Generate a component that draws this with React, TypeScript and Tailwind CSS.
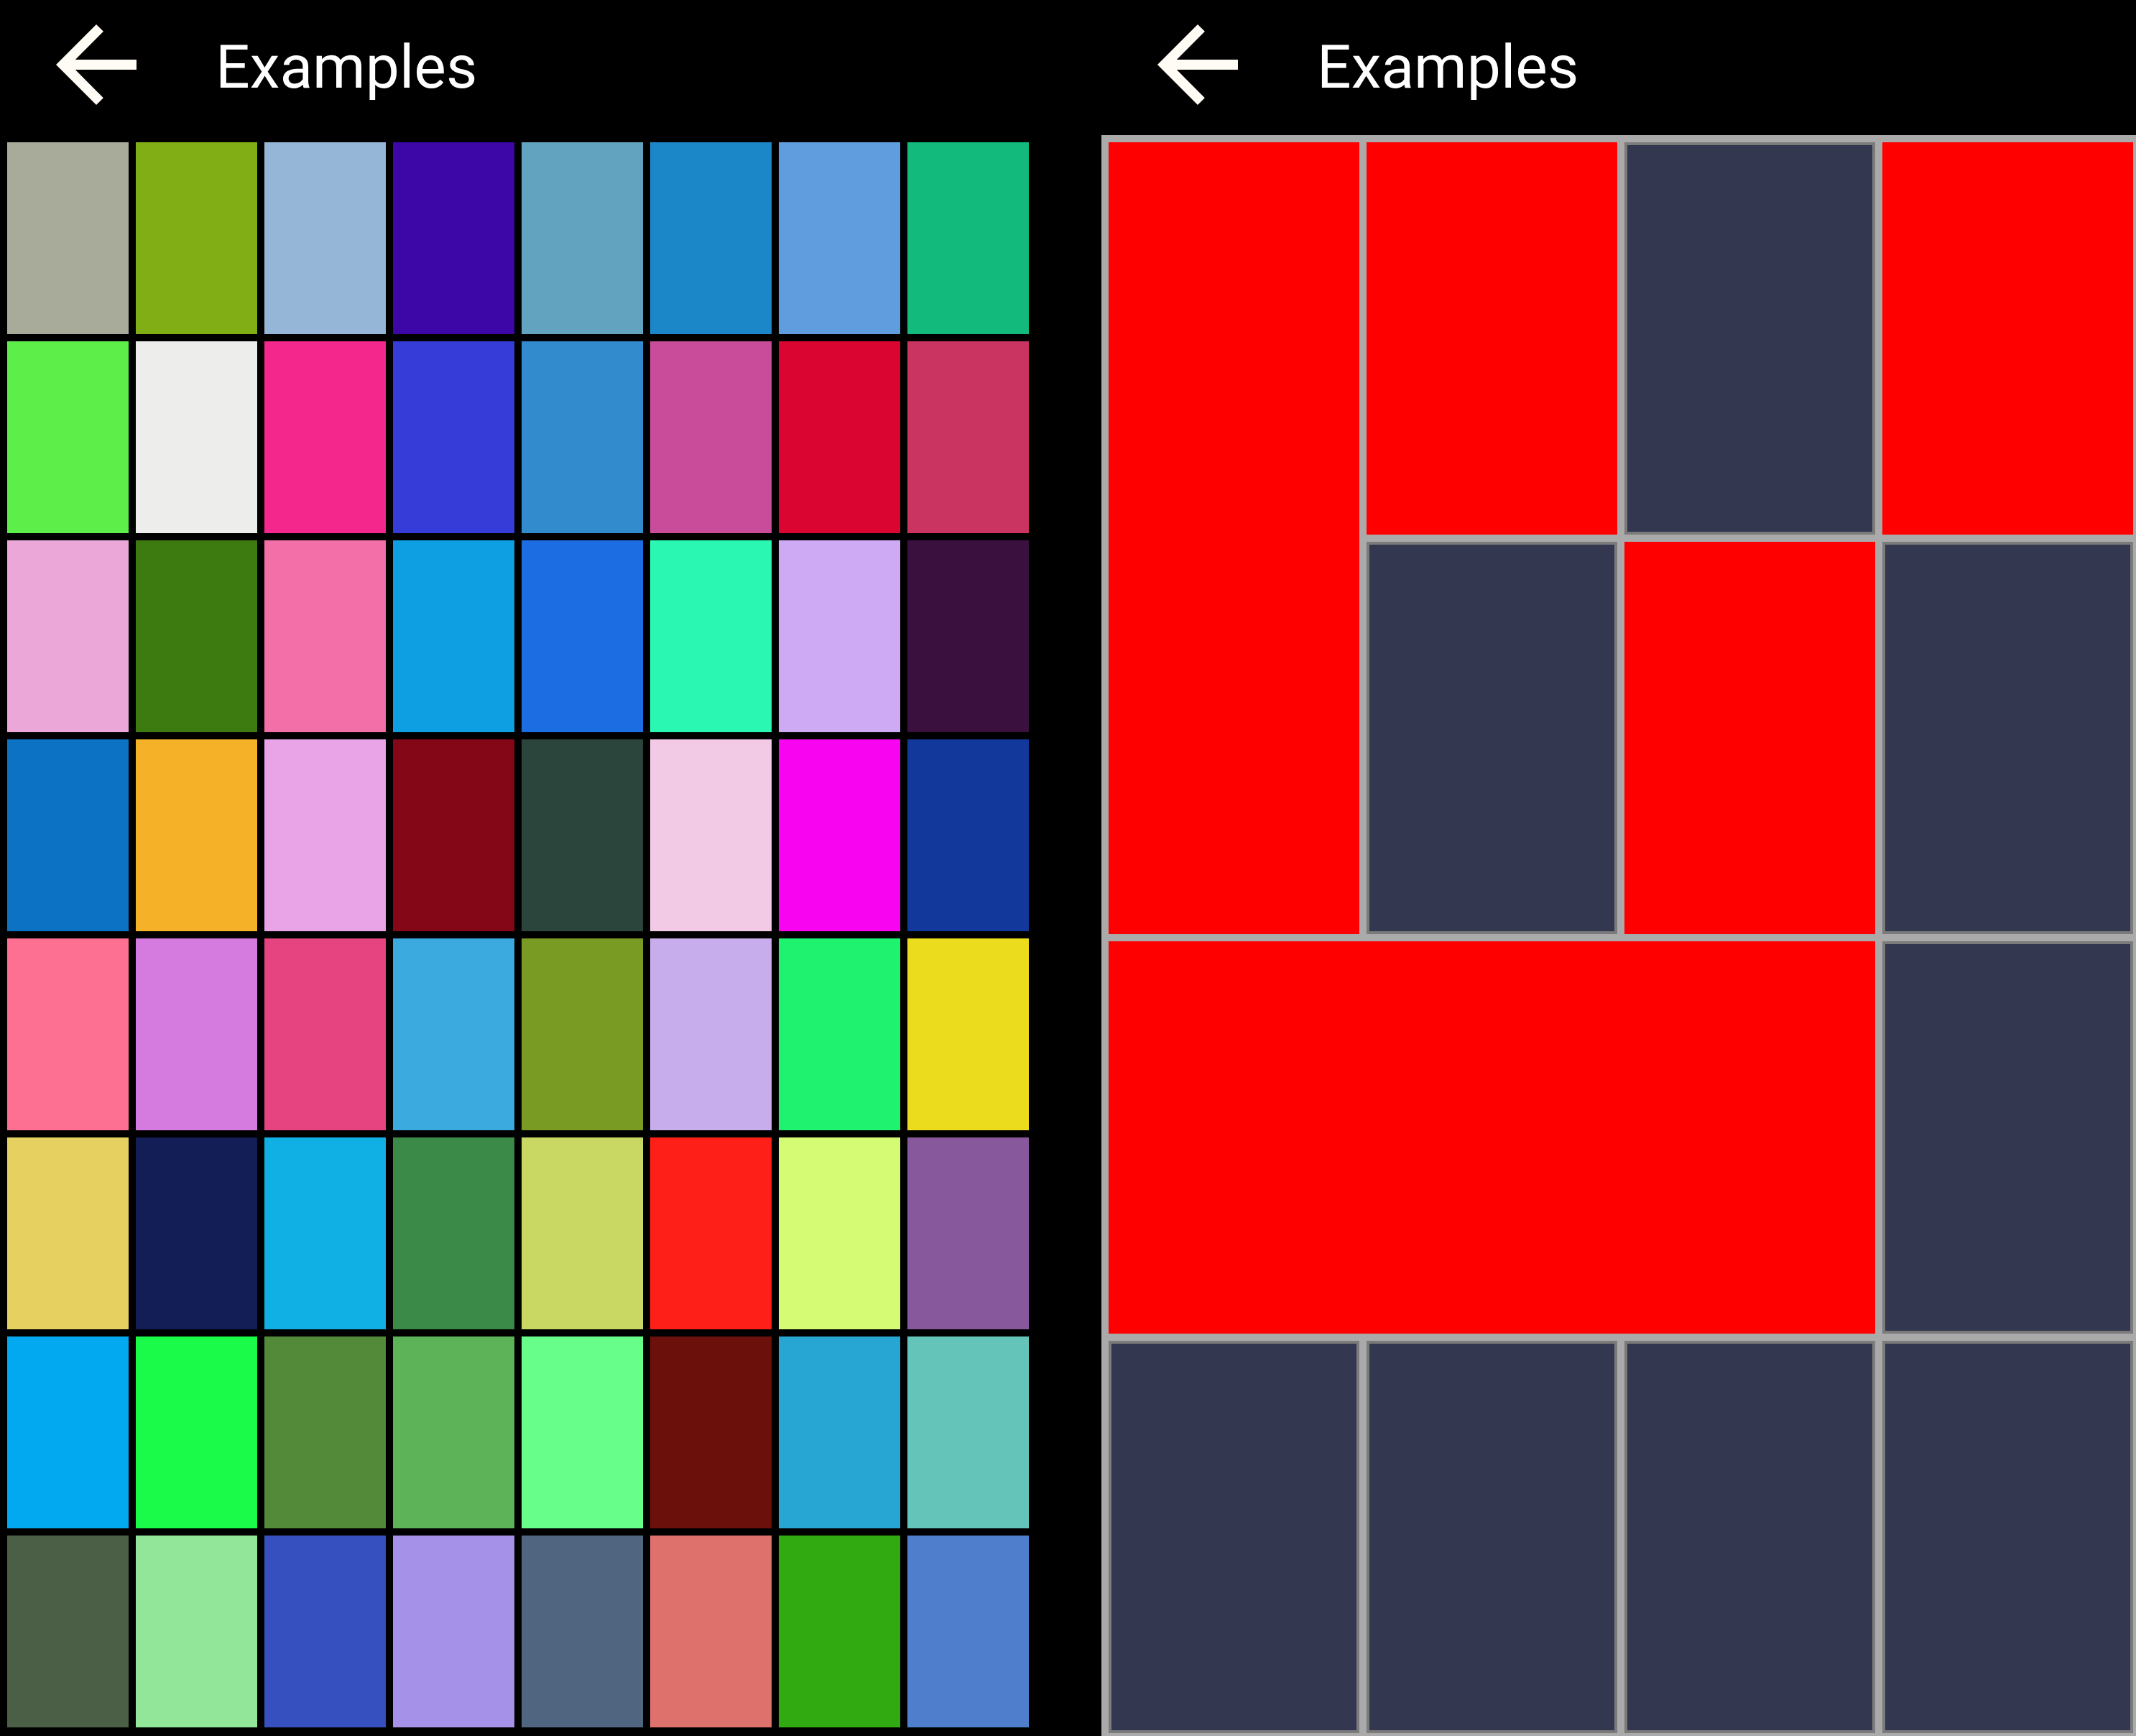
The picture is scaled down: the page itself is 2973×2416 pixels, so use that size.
const swatches = [
  "#a9ab9a", "#80ae14", "#96b6d8", "#3d06a6", "#62a3bf", "#1b87c8", "#5f9ddf", "#12ba7c",
  "#5eee4a", "#ededeb", "#f3278c", "#353cd8", "#318bcc", "#c84c9a", "#db0532", "#c93461",
  "#eaa7d8", "#3d7a10", "#f36fa8", "#0e9fe2", "#1d6de2", "#2af8b2", "#ceaaf5", "#3a103f",
  "#0c72c4", "#f5b228", "#e8a4e6", "#840718", "#2b453c", "#f2cae6", "#f804f1", "#11389a",
  "#fe7092", "#d57adf", "#e64381", "#3aaadf", "#7a9b23", "#c8aded", "#1ef26f", "#ebdc1e",
  "#e6d160", "#121e55", "#10b0e5", "#3b8a47", "#c8d862", "#fd1f18", "#d5fa74", "#88589c",
  "#03a9f0", "#1afa49", "#538a39", "#5db357", "#68fe8a", "#6b100a", "#27a6d3", "#65c4b9",
  "#4b5f47", "#92e69a", "#3750c0", "#a591e7", "#4f6580", "#df716c", "#30aa10", "#4f7fcc",
];

type Tile = { on: boolean; span?: string };

const tiles: Tile[] = [
  { on: true, span: "row-span-2" },
  { on: true },
  { on: false },
  { on: true },
  { on: false },
  { on: true },
  { on: false },
  { on: true, span: "col-span-3" },
  { on: false },
  { on: false },
  { on: false },
  { on: false },
  { on: false },
];

const Header = () => (
  <div className="flex h-[188px] shrink-0 items-center pl-[50px]">
    <svg
      viewBox="0 0 24 24"
      className="-mt-[8px] h-[168px] w-[168px] shrink-0"
      fill="#fffcf6"
    >
      <path d="M20 11H7.83l5.59-5.59L12 4l-8 8 8 8 1.41-1.41L7.83 13H20v-2z" />
    </svg>
    <span className="ml-[82px] text-[84px] leading-none text-white">
      Examples
    </span>
  </div>
);

export default function App() {
  return (
    <div
      className="flex h-[2416px] w-[2973px] gap-[93px] overflow-hidden bg-black"
      style={{ fontFamily: "Roboto, 'Noto Sans', sans-serif" }}
    >
      <div className="flex w-[1440px] flex-col">
        <Header />
        <div className="grid auto-rows-[267px] grid-cols-[repeat(8,169px)] gap-[10px] pl-[10px] pt-[10px]">
          {swatches.map((c, i) => (
            <div key={i} style={{ backgroundColor: c }} />
          ))}
        </div>
      </div>

      <div className="flex w-[1440px] flex-col">
        <Header />
        <div className="grid flex-1 auto-rows-[546px] grid-cols-[repeat(4,349px)] gap-[10px] overflow-hidden bg-[#aaaaaa] pl-[10px] pr-[4px] pt-[10px]">
          {tiles.map((t, i) =>
            t.on ? (
              <div key={i} className={`bg-[#ff0000] ${t.span ?? ""}`} />
            ) : (
              <div
                key={i}
                className={`border-4 border-[#7b7b7b] bg-[#33374f] ${t.span ?? ""}`}
              />
            ),
          )}
        </div>
      </div>
    </div>
  );
}
